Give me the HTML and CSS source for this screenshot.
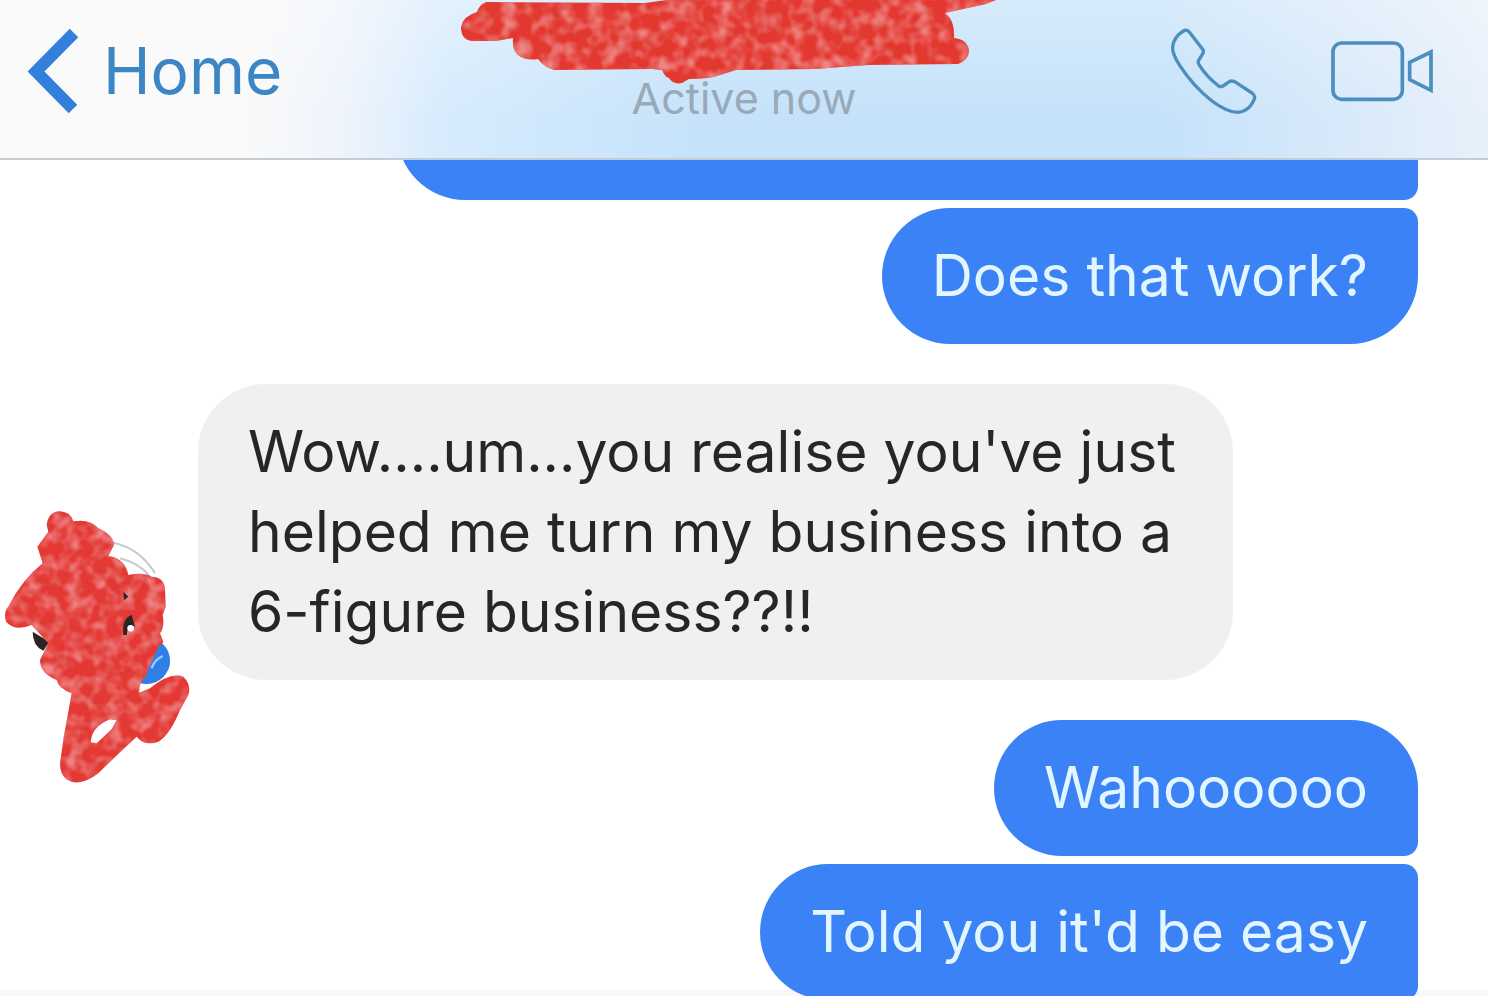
FILE: index.html
```html
<!DOCTYPE html>
<html lang="en">
<head>
	<meta charset="utf-8">
	<title>Chat</title>
	<link rel="stylesheet" href="styles.css">
</head>
<body>
	<header class="topbar">
		<a class="back" href="#home">
			<svg width="52" height="86" viewBox="27 27 52 86" aria-hidden="true">
				<path d="M74 32 36 70.500 73 108" fill="none" stroke="#337fdc" stroke-width="12"/>
			</svg>
			Home
		</a>
		<div class="contact">
			<!-- name is scribbled out -->
			<svg class="scribble" width="568" height="84" viewBox="0 0 568 84" aria-hidden="true">
				<defs>
					<filter id="crayon" x="0" y="0" width="100%" height="100%" color-interpolation-filters="sRGB">
						<feTurbulence type="fractalNoise" baseFrequency="0.07" numOctaves="2" seed="4" result="noise"/>
						<feColorMatrix in="noise" type="matrix" values="0 0 0 0 0.93  0 0 0 0 0.52  0 0 0 0 0.51  2.500 0 0 0 -1.000" result="light"/>
						<feComposite in="light" in2="SourceGraphic" operator="in" result="marks"/>
						<feMerge>
							<feMergeNode in="SourceGraphic"/>
							<feMergeNode in="marks"/>
						</feMerge>
					</filter>
				</defs>
				<path filter="url(#crayon)" fill="#e33830" d="M26 2 Q19 5 17 12 Q3 16 1 27 Q1 40 12 41 L36 41 53 38 Q52 50 58 55 Q66 61 78 59 Q84 67 94 70 L192 69 202 70 Q205 77 209 78 Q213 85 222 83 L229 79 Q250 79 260 75 L276 70 355 69 408 65 498 64 Q509 60 509 50 Q507 39 494 38 Q495 20 485 13 L526 4 536 0 H207 L185 3 Z"/>
			</svg>
			<span class="status">Active now</span>
		</div>
		<div class="actions">
			<button type="button" aria-label="Call">
				<svg width="88" height="88" viewBox="120 80 264 264" aria-hidden="true">
					<path d="M160 92 Q170 86 178 95 L219 148 Q222 155 217 162 L206 180 Q203 186 207 193 Q230 230 266 257 Q272 261 279 257 L298 244 Q305 240 314 244 L366 278 Q377 286 373 296 Q358 334 322 336 Q290 335 246 302 Q190 258 149 195 Q126 160 128 140 Q131 110 160 92 Z" fill="none" stroke="#4a8fbd" stroke-width="10" stroke-linejoin="round"/>
				</svg>
			</button>
			<button type="button" aria-label="Video call">
				<svg width="105" height="64" viewBox="600 115 315 192" aria-hidden="true">
					<g fill="none" stroke="#4a8fbd" stroke-width="11">
						<rect x="609" y="127" width="208" height="169" rx="26"/>
						<path d="M839 185 903 154 V269 L839 237 Z"/>
					</g>
				</svg>
			</button>
		</div>
	</header>

	<main class="chat">
		<div class="bubble sent first cut"></div>
		<div class="bubble sent last">Does that work?</div>

		<div class="row">
			<svg class="avatar" width="190" height="276" viewBox="0 54 570 828" aria-hidden="true">
				<defs>
					<filter id="crayon-small" x="0" y="0" width="100%" height="100%" color-interpolation-filters="sRGB">
						<feTurbulence type="fractalNoise" baseFrequency="0.025" numOctaves="2" seed="7" result="noise"/>
						<feColorMatrix in="noise" type="matrix" values="0 0 0 0 0.93  0 0 0 0 0.52  0 0 0 0 0.52  2.500 0 0 0 -1.000" result="light"/>
						<feComposite in="light" in2="SourceGraphic" operator="in" result="marks"/>
						<feMerge>
							<feMergeNode in="SourceGraphic"/>
							<feMergeNode in="marks"/>
						</feMerge>
					</filter>
				</defs>
				<path d="M340 158 Q420 175 465 250 M360 205 Q420 220 450 260" fill="none" stroke="#c3cccc" stroke-width="6"/>
				<circle cx="440" cy="512" r="70" fill="#2f7fe6"/>
				<path d="M98 425 Q98 468 130 482 L148 455 Z" fill="#2c2424"/>
				<path filter="url(#crayon-small)" fill="#e33833" fill-rule="evenodd" d="M140 105 Q145 65 180 64 Q212 66 220 94 Q270 85 295 115 Q340 135 342 165 L325 198 Q375 205 385 255 Q430 245 455 260 Q490 260 495 295 L497 350 488 375 Q495 410 480 430 L490 455 Q460 495 438 560 Q415 575 418 608 L450 595 Q510 545 550 560 Q575 585 565 615 L540 660 Q510 735 475 755 Q435 770 410 740 Q350 795 295 850 Q250 885 215 875 Q180 865 180 820 Q190 740 205 665 L215 610 Q175 595 170 570 Q120 550 120 510 L145 460 95 405 Q45 425 18 395 Q10 365 25 350 Q65 270 128 220 L112 170 145 125 Z M272 757 Q275 710 330 688 L350 690 335 718 290 760 Z"/>
				<path d="M480 462 Q515 490 508 530 Q485 580 430 582 Q445 530 480 462 Z" fill="#2f7fe6"/>
				<path d="M455 535 Q462 510 488 498" fill="none" stroke="#9ecbff" stroke-width="7"/>
				<path d="M370 435 Q365 385 395 375 L405 410 Q382 400 380 435 Z M370 305 L385 320 372 330 Z" fill="#2c2424"/>
				<circle cx="392" cy="415" r="10" fill="#fff"/>
			</svg>
			<div class="bubble received">Wow....um...you realise you've just helped me turn my business into a 6-figure business??!!</div>
		</div>

		<div class="bubble sent first">Wahoooooo</div>
		<div class="bubble sent middle">Told you it'd be easy</div>
	</main>
</body>
</html>
```

FILE: styles.css
```css
* {
	box-sizing: border-box;
}
body {
	margin: 0;
	height: 100vh;
	overflow: hidden;
	display: flex;
	flex-direction: column;
	background-color: #fff;
	font-family: Inter, "Liberation Sans", sans-serif;
}
.topbar {
	position: relative;
	z-index: 1;
	flex: none;
	display: grid;
	grid-template-columns: 1fr auto 1fr;
	height: 160px;
	padding: 0 27px;
	border-bottom: 2px solid #c3cdd6;
	background: linear-gradient(to bottom, rgba(255, 255, 255, 0.3), rgba(255, 255, 255, 0) 75%),
		linear-gradient(to right, #f9f9f9 17%, #eff4fc 23%, #d6ebfd 30%, #c5e2fa 48%, #c5e2fa 78%, #dcebfa 93%, #e8f1fb);
}
.back {
	display: flex;
	align-items: center;
	align-self: start;
	gap: 24px;
	margin-top: 28px;
	color: #3d86c6;
	font-size: 64px;
	line-height: 86px;
	text-decoration: none;
}
.contact {
	display: flex;
	flex-direction: column;
	align-items: center;
}
.status {
	margin-top: -10px;
	color: #98a9b8;
	font-size: 43px;
	line-height: 48px;
}
.actions {
	display: flex;
	align-items: center;
	align-self: start;
	justify-content: flex-end;
	gap: 72px;
	margin-top: 27px;
	padding-right: 26px;
}
.actions button {
	padding: 0;
	border: none;
	background: none;
	cursor: pointer;
}
svg {
	display: block;
	flex: none;
}

.chat {
	flex: 1;
	min-height: 0;
	display: flex;
	flex-direction: column;
	padding-right: 70px;
	background: linear-gradient(to top, #f8f8f8 6px, #fff 6px);
}
.bubble {
	flex: none;
	padding: 28px 50px;
	border-radius: 68px;
	font-size: 57px;
	line-height: 80px;
}
.sent {
	align-self: flex-end;
	margin-bottom: 8px;
	background-color: #3b82f6;
	color: #e2f6ff;
}
.first {
	border-bottom-right-radius: 14px;
}
.middle {
	border-top-right-radius: 14px;
	border-bottom-right-radius: 14px;
}
.last {
	border-top-right-radius: 14px;
	margin-bottom: 40px;
}
/* older message, scrolled up under the top bar */
.cut {
	width: 72%;
	height: 136px;
	margin-top: -96px;
}
.row {
	flex: none;
	display: flex;
	align-items: flex-end;
	gap: 8px;
	margin-bottom: 40px;
}
.avatar {
	margin-bottom: -104px;
}
.received {
	flex: 0 1 auto;
	max-width: 73%;
	background-color: #f0f0f0;
	color: #262626;
}
```
